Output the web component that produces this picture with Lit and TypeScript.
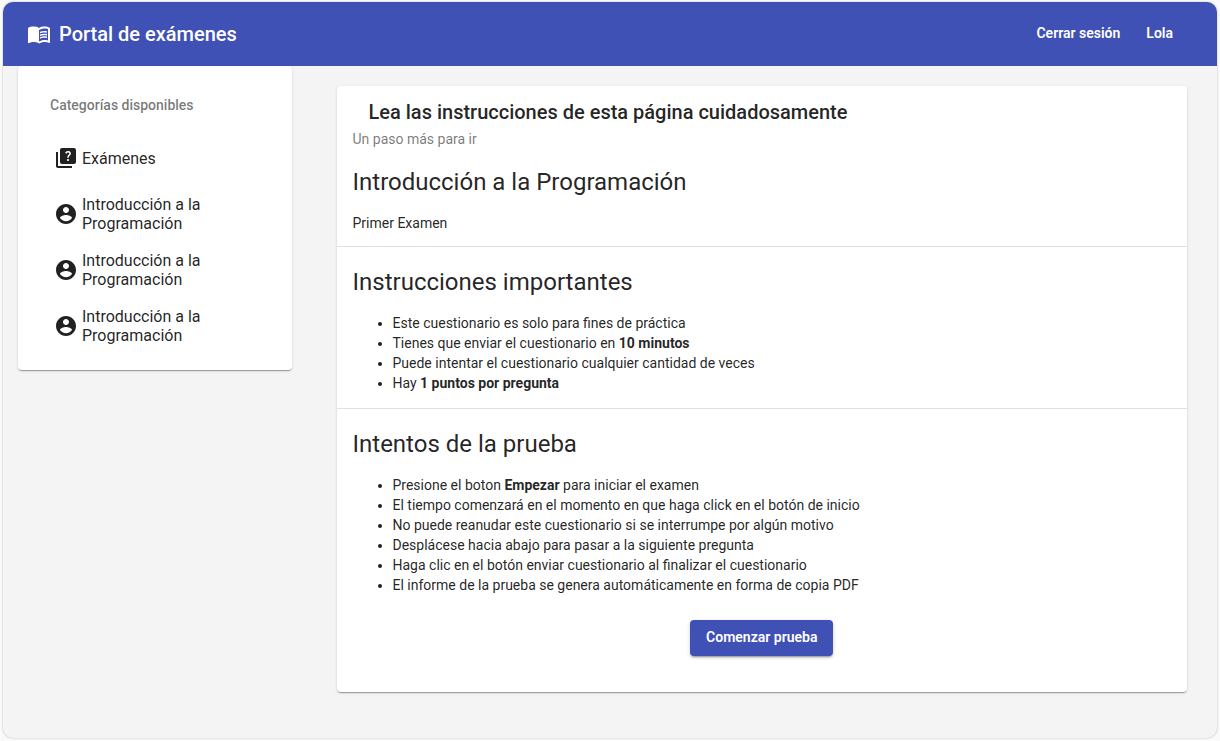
import { LitElement, html, css, svg } from "lit";
import { customElement, state } from "lit/decorators.js";

const ICONS = {
  book: svg`<path d="M21 5c-1.11-.35-2.33-.5-3.5-.5-1.95 0-4.05.4-5.5 1.5-1.45-1.1-3.55-1.5-5.5-1.5S2.45 4.9 1 6v14.65c0 .25.25.5.5.5.1 0 .15-.05.25-.05C3.1 20.45 5.05 20 6.5 20c1.95 0 4.05.4 5.5 1.5 1.35-.85 3.8-1.5 5.5-1.5 1.65 0 3.35.3 4.75 1.05.1.05.15.05.25.05.25 0 .5-.25.5-.5V6c-.6-.45-1.25-.75-2-1zm0 13.5c-1.1-.35-2.3-.5-3.5-.5-1.7 0-4.15.65-5.5 1.5V8c1.35-.85 3.8-1.5 5.5-1.5 1.2 0 2.4.15 3.5.5v11.5z"/><path d="M17.5 10.5c.88 0 1.73.09 2.5.26V9.24c-.79-.15-1.64-.24-2.5-.24-1.7 0-3.24.29-4.5.83v1.66c1.13-.64 2.7-.99 4.5-.99zM13 12.49v1.66c1.13-.64 2.7-.99 4.5-.99.88 0 1.73.09 2.5.26V11.9c-.79-.15-1.64-.24-2.5-.24-1.7 0-3.24.3-4.5.83zM17.5 14.33c-1.7 0-3.24.29-4.5.83v1.66c1.13-.64 2.7-.99 4.5-.99.88 0 1.73.09 2.5.26v-1.52c-.79-.16-1.64-.24-2.5-.24z"/>`,
  quiz: svg`<path d="M4 6H2v14c0 1.1.9 2 2 2h14v-2H4V6z"/><path d="M20 2H8c-1.1 0-2 .9-2 2v12c0 1.1.9 2 2 2h12c1.1 0 2-.9 2-2V4c0-1.1-.9-2-2-2zm-5.99 13c-.59 0-1.05-.47-1.05-1.05 0-.59.47-1.04 1.05-1.04.59 0 1.04.45 1.04 1.04-.01.58-.45 1.05-1.04 1.05zm2.5-6.17c-.63.93-1.23 1.21-1.56 1.81-.13.24-.18.4-.18 1.18h-1.52c0-.41-.06-1.08.26-1.65.41-.73 1.18-1.16 1.63-1.8.48-.68.21-1.94-1.14-1.94-.88 0-1.32.67-1.5 1.23l-1.37-.57C11.51 5.96 12.52 5 13.99 5c1.23 0 2.08.56 2.51 1.26.37.61.58 1.73.01 2.57z"/>`,
  account: svg`<path d="M12 2C6.48 2 2 6.48 2 12s4.48 10 10 10 10-4.48 10-10S17.52 2 12 2zm0 3c1.66 0 3 1.34 3 3s-1.34 3-3 3-3-1.34-3-3 1.34-3 3-3zm0 14.2c-2.5 0-4.71-1.28-6-3.22.03-1.99 4-3.08 6-3.08 1.99 0 5.97 1.09 6 3.08-1.29 1.94-3.5 3.22-6 3.22z"/>`,
};

type IconName = keyof typeof ICONS;

const icon = (name: IconName) =>
  html`<svg class="icon" viewBox="0 0 24 24" aria-hidden="true">${ICONS[name]}</svg>`;

@customElement("app-root")
export class AppRoot extends LitElement {
  static styles = css`
    :host {
      display: block;
      box-sizing: border-box;
      min-height: 100vh;
      padding: 2px 3px;
      background: #fafafa;
      color: rgba(0, 0, 0, 0.87);
      font: 400 14px/20px Roboto, sans-serif;
    }
    * { box-sizing: border-box; }
    .frame {
      min-height: calc(100vh - 5px);
      border-radius: 10px;
      background: #f4f4f4;
      box-shadow: 0 0 2px rgba(0, 0, 0, 0.3);
      overflow: hidden;
    }
    .toolbar {
      display: flex;
      align-items: center;
      height: 64px;
      padding: 0 31px 0 24px;
      background: #3f51b5;
      color: #fff;
    }
    .icon {
      flex: none;
      width: 24px;
      height: 24px;
      fill: currentColor;
    }
    .brand {
      display: flex;
      align-items: center;
      gap: 8px;
      color: inherit;
      font-size: 20px;
      font-weight: 500;
      text-decoration: none;
    }
    .session {
      display: flex;
      margin-left: auto;
    }
    button {
      border: 0;
      background: none;
      color: inherit;
      font: inherit;
      cursor: pointer;
    }
    .link {
      padding: 0 13px 2px;
      font-weight: 600;
      line-height: 34px;
    }
    .layout {
      display: grid;
      grid-template-columns: 1fr 3fr;
      align-items: start;
    }
    .card {
      border-radius: 4px;
      background: #fff;
      box-shadow: 0 2px 1px -1px rgba(0, 0, 0, 0.2),
        0 1px 1px 0 rgba(0, 0, 0, 0.14), 0 1px 3px 0 rgba(0, 0, 0, 0.12);
    }
    .sidebar {
      min-width: 0;
      margin: 0 15px;
      padding: 16px;
    }
    .subheader {
      margin: 0;
      padding: 15px 16px 17px;
      color: rgba(0, 0, 0, 0.54);
      font-size: 14px;
      font-weight: 500;
      line-height: 16px;
    }
    .item {
      display: flex;
      align-items: center;
      gap: 4px;
      width: 100%;
      height: 56px;
      padding: 0 20px;
      font-size: 16px;
      line-height: 19px;
      text-align: left;
    }
    .main {
      min-width: 0;
      margin: 20px 30px;
      padding: 16px 0 36px;
    }
    .title {
      margin: 0 32px 7px;
      font-size: 20px;
      font-weight: 500;
      line-height: 20px;
    }
    .subtitle {
      margin: 0 16px 17px;
      color: rgba(0, 0, 0, 0.54);
    }
    .heading {
      margin: 0 16px 15px;
      font-size: 24px;
      font-weight: 400;
      line-height: 32px;
    }
    .text { margin: 0 16px; }
    .divider {
      margin: 13px 0 19px;
      border: 0;
      border-top: 1px solid rgba(0, 0, 0, 0.12);
    }
    .list {
      margin: 0 16px 15px;
      padding-left: 40px;
    }
    .actions {
      display: flex;
      justify-content: center;
      margin-top: 25px;
    }
    .start {
      padding: 0 16px 2px;
      border-radius: 4px;
      background: #3f51b5;
      box-shadow: 0 3px 1px -2px rgba(0, 0, 0, 0.2),
        0 2px 2px 0 rgba(0, 0, 0, 0.14), 0 1px 5px 0 rgba(0, 0, 0, 0.12);
      color: #fff;
      font-weight: 600;
      line-height: 34px;
    }
  `;

  @state() private categories = [
    "Introducción a la Programación",
    "Introducción a la Programación",
    "Introducción a la Programación",
  ];

  private item(name: IconName, label: string) {
    return html`<button class="item" type="button">${icon(name)}<span>${label}</span></button>`;
  }

  render() {
    return html`
      <div class="frame">
        <header class="toolbar">
          <a class="brand" href="#">${icon("book")}<span>Portal de exámenes</span></a>
          <div class="session">
            <button class="link" type="button">Cerrar sesión</button>
            <button class="link" type="button">Lola</button>
          </div>
        </header>
        <div class="layout">
          <nav class="card sidebar">
            <h3 class="subheader">Categorías disponibles</h3>
            ${this.item("quiz", "Exámenes")}
            ${this.categories.map((c) => this.item("account", c))}
          </nav>
          <main class="card main">
            <h2 class="title">Lea las instrucciones de esta página cuidadosamente</h2>
            <p class="subtitle">Un paso más para ir</p>
            <h1 class="heading">Introducción a la Programación</h1>
            <p class="text">Primer Examen</p>
            <hr class="divider" />
            <h1 class="heading">Instrucciones importantes</h1>
            <ul class="list">
              <li>Este cuestionario es solo para fines de práctica</li>
              <li>Tienes que enviar el cuestionario en <b>10 minutos</b></li>
              <li>Puede intentar el cuestionario cualquier cantidad de veces</li>
              <li>Hay <b>1 puntos por pregunta</b></li>
            </ul>
            <hr class="divider" />
            <h1 class="heading">Intentos de la prueba</h1>
            <ul class="list">
              <li>Presione el boton <b>Empezar</b> para iniciar el examen</li>
              <li>El tiempo comenzará en el momento en que haga click en el botón de inicio</li>
              <li>No puede reanudar este cuestionario si se interrumpe por algún motivo</li>
              <li>Desplácese hacia abajo para pasar a la siguiente pregunta</li>
              <li>Haga clic en el botón enviar cuestionario al finalizar el cuestionario</li>
              <li>El informe de la prueba se genera automáticamente en forma de copia PDF</li>
            </ul>
            <div class="actions">
              <button class="start" type="button">Comenzar prueba</button>
            </div>
          </main>
        </div>
      </div>
    `;
  }
}
